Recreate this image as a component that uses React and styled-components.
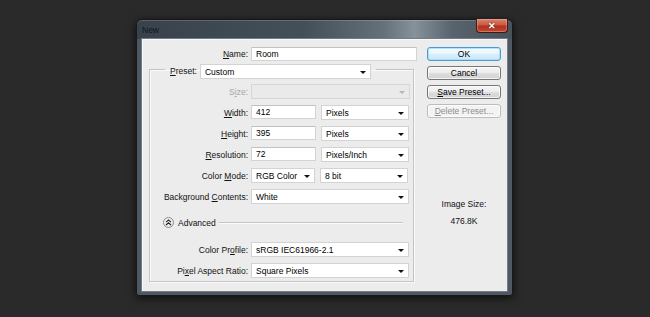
import styled, { createGlobalStyle } from "styled-components";

const GlobalStyle = createGlobalStyle`
  html, body {
    margin: 0;
    padding: 0;
    background: #2a2a2a;
  }
  body {
    font-family: "Liberation Sans", Arial, sans-serif;
  }
`;

const unitRows = [
  { label: "Width", key: "W", value: "412", unit: "Pixels" },
  { label: "Height", key: "H", value: "395", unit: "Pixels" },
  { label: "Resolution", key: "R", value: "72", unit: "Pixels/Inch" },
];

// splits a label so the access key letter gets underlined
const Accel = ({ text, k }) => {
  const i = text.indexOf(k);
  if (i < 0) return text;
  return (
    <>
      {text.slice(0, i)}
      <Key>{k}</Key>
      {text.slice(i + 1)}
    </>
  );
};

const App = () => {
  return (
    <Screen>
      <GlobalStyle />
      <Window>
        <TitleBar>
          <Title>New</Title>
          <CloseButton>✕</CloseButton>
        </TitleBar>
        <Client>
          <LeftCol>
            <NameRow>
              <Label>
                <Accel text="Name:" k="N" />
              </Label>
              <TextBox>Room</TextBox>
            </NameRow>

            <Group>
              <Legend>
                <LegendLabel>
                  <Accel text="Preset:" k="P" />
                </LegendLabel>
                <Select w={171}>
                  Custom
                  <Arrow />
                </Select>
              </Legend>

              <Rows>
                <Row>
                  <Label disabled>
                    <Accel text="Size:" k="i" />
                  </Label>
                  <Select w={159} disabled>
                    <Arrow disabled />
                  </Select>
                </Row>

                {unitRows.map((r) => (
                  <Row key={r.label}>
                    <Label>
                      <Accel text={r.label + ":"} k={r.key} />
                    </Label>
                    <Controls>
                      <TextBox w={65}>{r.value}</TextBox>
                      <Select w={88}>
                        {r.unit}
                        <Arrow />
                      </Select>
                    </Controls>
                  </Row>
                ))}

                <Row>
                  <Label>
                    <Accel text="Color Mode:" k="M" />
                  </Label>
                  <Controls>
                    <Select w={64}>
                      RGB Color
                      <Arrow />
                    </Select>
                    <Select w={88}>
                      8 bit
                      <Arrow />
                    </Select>
                  </Controls>
                </Row>

                <Row>
                  <Label>
                    <Accel text="Background Contents:" k="C" />
                  </Label>
                  <Select w={158}>
                    White
                    <Arrow />
                  </Select>
                </Row>

                <AdvancedRow>
                  <Toggle>
                    <svg width="7" height="7" viewBox="0 0 7 7">
                      <path d="M1 3.2 L3.5 1 L6 3.2" fill="none" stroke="#222" strokeWidth="1.1" />
                      <path d="M1 6 L3.5 3.8 L6 6" fill="none" stroke="#222" strokeWidth="1.1" />
                    </svg>
                  </Toggle>
                  <AdvancedText>Advanced</AdvancedText>
                  <Rule />
                </AdvancedRow>

                <Row>
                  <Label>
                    Color Pr<Key>o</Key>file:
                  </Label>
                  <Select w={158}>
                    sRGB IEC61966-2.1
                    <Arrow />
                  </Select>
                </Row>

                <Row>
                  <Label>
                    Pi<Key>x</Key>el Aspect Ratio:
                  </Label>
                  <Select w={158}>
                    Square Pixels
                    <Arrow />
                  </Select>
                </Row>
              </Rows>
            </Group>
          </LeftCol>

          <RightCol>
            <Button primary>OK</Button>
            <Button>Cancel</Button>
            <Button>
              <Accel text="Save Preset..." k="S" />
            </Button>
            <Button disabled>
              <Accel text="Delete Preset..." k="D" />
            </Button>
            <Info>
              <InfoLine>Image Size:</InfoLine>
              <InfoLine>476.8K</InfoLine>
            </Info>
          </RightCol>
        </Client>
      </Window>
    </Screen>
  );
};

export default App;

const Screen = styled.div`
  width: 650px;
  height: 317px;
  box-sizing: border-box;
  padding: 19px 0 0 136px;
  background: #2a2a2a;
`;

const Window = styled.div`
  width: 377px;
  height: 277px;
  box-sizing: border-box;
  border: 1px solid #16191c;
  border-radius: 6px 6px 3px 3px;
  background:
    linear-gradient(90deg, #39424b 0%, #444f59 45%, #66717b 66%, #87919a 74%, #58636e 84%, #47525d 100%) top / 100% 19px no-repeat,
    #4f5862;
  box-shadow: inset 0 1px 0 rgba(255, 255, 255, 0.18), 0 2px 8px rgba(0, 0, 0, 0.7);
  padding: 0 4px 3px 4px;
  display: flex;
  flex-direction: column;
`;

const TitleBar = styled.div`
  height: 18px;
  display: flex;
  justify-content: space-between;
  align-items: flex-start;
`;

const Title = styled.span`
  font-size: 8.5px;
  color: #0b1621;
  padding: 5px 0 0 1px;
`;

const CloseButton = styled.div`
  width: 32px;
  height: 14px;
  margin-top: -1px;
  box-sizing: border-box;
  border: 1px solid #3d1a14;
  border-top: none;
  border-radius: 0 0 4px 4px;
  background: linear-gradient(#d9836f 0%, #c95a43 45%, #b0311d 55%, #c4472f 100%);
  box-shadow: inset 0 0 0 1px rgba(255, 200, 190, 0.35);
  color: #fff;
  font-size: 9px;
  font-weight: bold;
  display: flex;
  align-items: center;
  justify-content: center;
  text-shadow: 0 0 2px rgba(0, 0, 0, 0.6);
`;

const Client = styled.div`
  flex: 1;
  display: flex;
  gap: 10px;
  box-sizing: border-box;
  background: #ececec;
  border: 1px solid #737d87;
  box-shadow: inset 1px 1px 0 #f8f8f8;
  padding: 8px 6px 0 7px;
`;

const LeftCol = styled.div`
  width: 268px;
  display: flex;
  flex-direction: column;
`;

const RightCol = styled.div`
  width: 74px;
  display: flex;
  flex-direction: column;
  gap: 5px;
`;

const Key = styled.span`
  text-decoration: underline;
`;

const Label = styled.span`
  font-size: 8.5px;
  color: ${(p) => (p.disabled ? "#a6a6a6" : "#111")};
  text-align: right;
  white-space: nowrap;
`;

const LegendLabel = styled(Label)`
  line-height: 15px;
`;

const NameRow = styled.div`
  display: grid;
  grid-template-columns: 99px 166px;
  column-gap: 3px;
  align-items: center;
  height: 14px;
`;

const Field = styled.div`
  height: 15px;
  box-sizing: border-box;
  border: 1px solid #d3d3d3;
  border-top-color: #c2c2c2;
  background: #fff;
  font-size: 8.5px;
  color: #000;
  display: flex;
  align-items: center;
  padding: 0 4px;
  white-space: nowrap;
`;

const TextBox = styled(Field)`
  height: 14px;
  width: ${(p) => (p.w ? p.w + "px" : "auto")};
`;

const Select = styled(Field)`
  position: relative;
  flex-shrink: 0;
  width: ${(p) => p.w}px;
  background: ${(p) => (p.disabled ? "#eaeaea" : "#fff")};
  border-color: ${(p) => (p.disabled ? "#d6d6d6" : "#d3d3d3")};
`;

const Arrow = styled.span`
  position: absolute;
  right: 4px;
  top: 6px;
  width: 0;
  height: 0;
  border-left: 3px solid transparent;
  border-right: 3px solid transparent;
  border-top: 3px solid ${(p) => (p.disabled ? "#b5b5b5" : "#111")};
`;

const Group = styled.fieldset`
  margin: 3px 0 0 0;
  width: 265px;
  box-sizing: border-box;
  border: 1px solid #c4c4c4;
  box-shadow: inset 1px 1px 0 #fafafa, 1px 1px 0 #fafafa;
  padding: 10px 0 3px 0;
`;

const Legend = styled.legend`
  margin-left: 15px;
  padding: 0 5px;
  height: 10px;
  display: flex;
  align-items: flex-start;
  gap: 3px;
`;

const Rows = styled.div`
  display: flex;
  flex-direction: column;
  gap: 6px;
`;

const Row = styled.div`
  display: grid;
  grid-template-columns: 98px auto;
  column-gap: 3px;
  align-items: center;
  justify-items: start;
  height: 15px;

  & > ${Label} {
    justify-self: end;
  }
`;

const Controls = styled.div`
  display: flex;
  gap: 5px;
`;

const AdvancedRow = styled.div`
  display: flex;
  align-items: center;
  height: 11px;
  margin: 7px 10px 8px 13px;
`;

const Toggle = styled.div`
  width: 11px;
  height: 11px;
  box-sizing: border-box;
  border-radius: 50%;
  border: 1px solid #8d8d8d;
  background: radial-gradient(circle at 40% 35%, #ffffff, #dedede);
  display: flex;
  align-items: center;
  justify-content: center;
`;

const AdvancedText = styled.span`
  font-size: 8.5px;
  color: #111;
  margin-left: 4px;
`;

const Rule = styled.div`
  flex: 1;
  margin-left: 3px;
  border-top: 1px solid #c6c6c6;
  border-bottom: 1px solid #fafafa;
`;

const Button = styled.button`
  width: 74px;
  height: 14px;
  padding: 0;
  box-sizing: border-box;
  font-family: "Liberation Sans", Arial, sans-serif;
  font-size: 8.5px;
  color: ${(p) => (p.disabled ? "#8e8e8e" : "#000")};
  border-radius: 3px;
  border: 1px solid
    ${(p) => (p.primary ? "#4a9bd0" : p.disabled ? "#b9bdc0" : "#767676")};
  background: ${(p) =>
    p.primary
      ? "linear-gradient(#f4fbff 0%, #e8f5fd 50%, #d8eefb 51%, #cbe7f8 100%)"
      : p.disabled
      ? "#f3f3f3"
      : "linear-gradient(#f6f6f6 0%, #ececec 50%, #dedede 51%, #d2d2d2 100%)"};
  box-shadow: inset 0 0 0 1px
    ${(p) => (p.primary ? "rgba(160, 220, 250, 0.8)" : "rgba(255, 255, 255, 0.7)")};
`;

const Info = styled.div`
  margin-top: 76px;
  display: flex;
  flex-direction: column;
  align-items: center;
  gap: 6px;
`;

const InfoLine = styled.span`
  font-size: 8.5px;
  line-height: 11px;
  color: #111;
`;
